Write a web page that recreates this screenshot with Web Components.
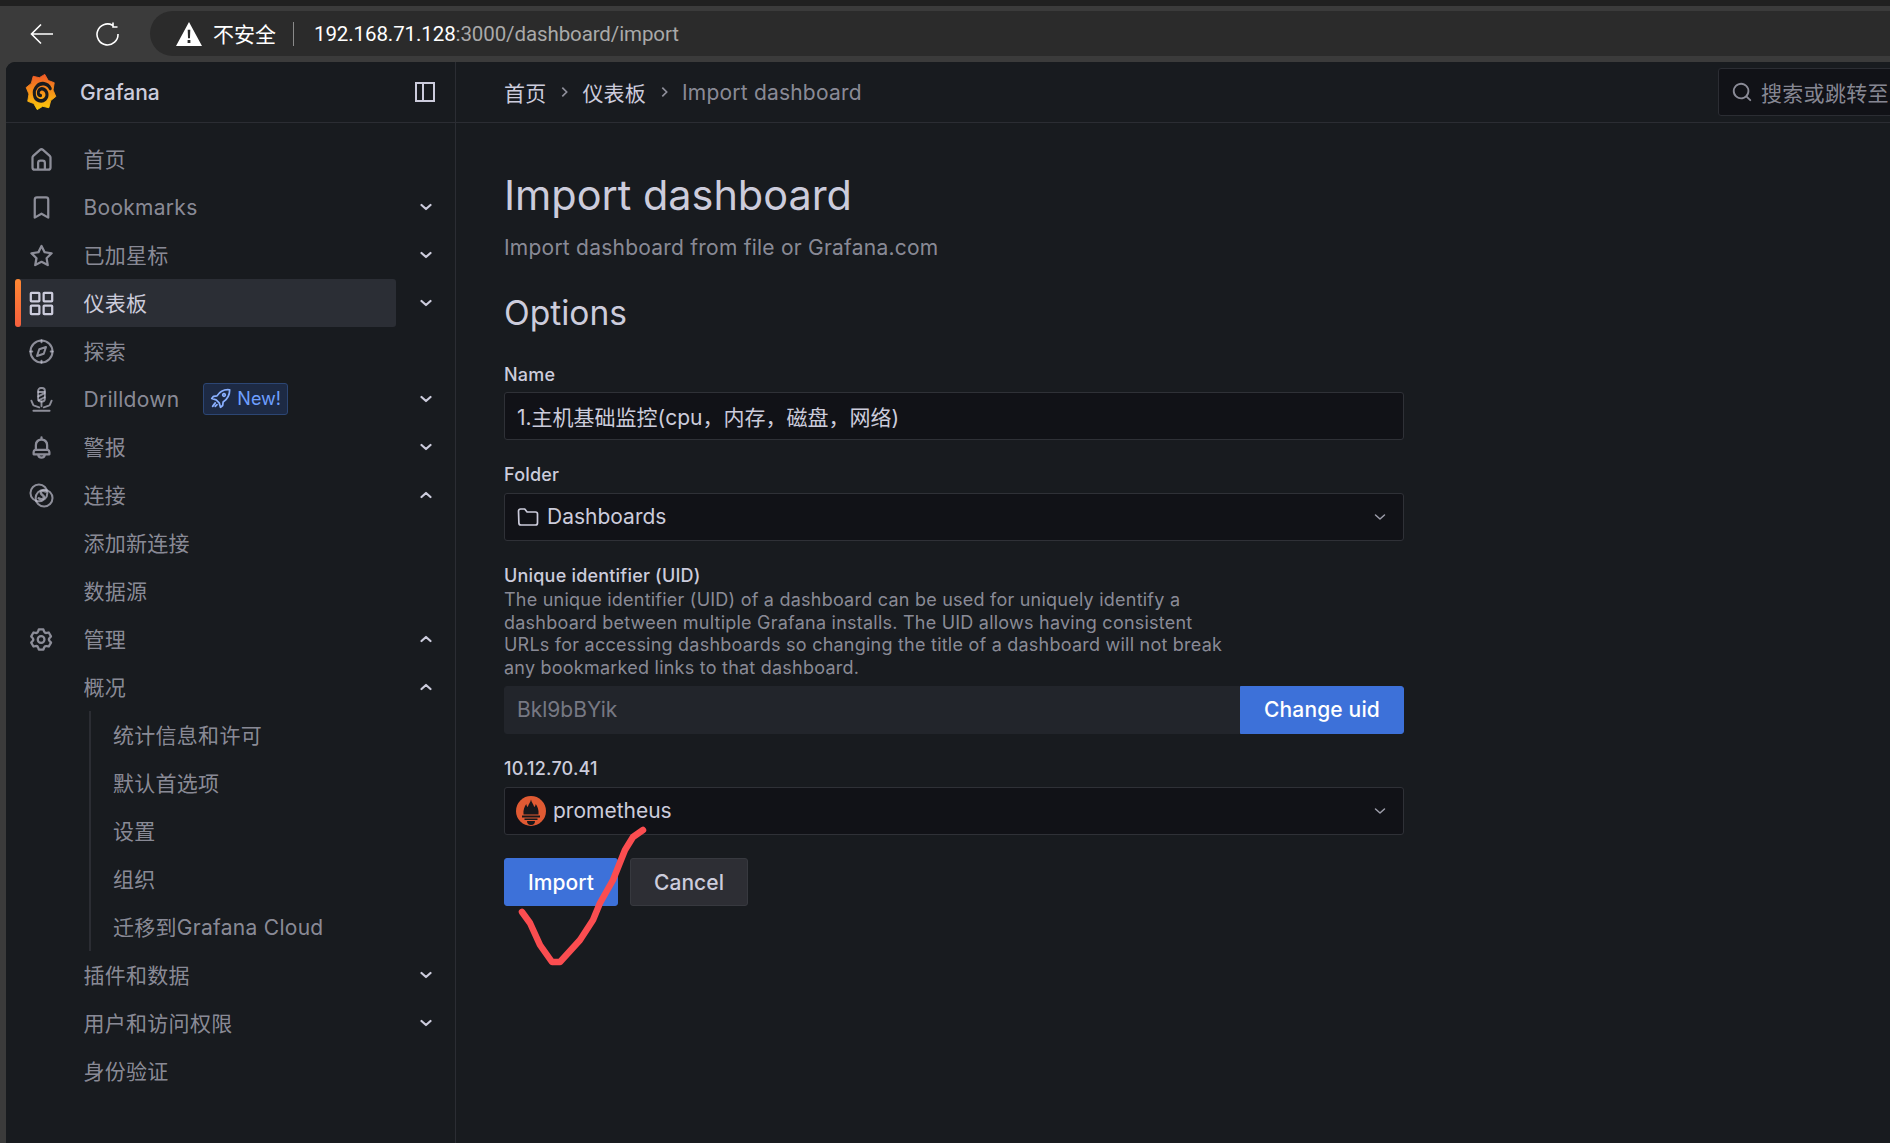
<!DOCTYPE html>
<html lang="zh">
<head>
<meta charset="utf-8">
<title>Import dashboard</title>
<style>
html,body{margin:0;padding:0;height:100%;background:#3b3b3b;overflow:hidden}
body{font-family:Inter,"Noto Sans CJK SC",sans-serif;color:#ccccdc;font-size:21px}
</style>
</head>
<body>
<browser-chrome></browser-chrome>
<grafana-app>
  <gf-sidebar slot="sidebar">
    <nav-item icon="home">首页</nav-item>
    <nav-item icon="bookmark" chevron="down">Bookmarks</nav-item>
    <nav-item icon="star" chevron="down">已加星标</nav-item>
    <nav-item icon="apps" chevron="down" active>仪表板</nav-item>
    <nav-item icon="compass">探索</nav-item>
    <nav-item icon="drilldown" chevron="down">Drilldown<new-badge slot="badge">New!</new-badge></nav-item>
    <nav-item icon="bell" chevron="down">警报</nav-item>
    <nav-item icon="link" chevron="up">连接</nav-item>
    <nav-item icon="none">添加新连接</nav-item>
    <nav-item icon="none">数据源</nav-item>
    <nav-item icon="cog" chevron="up">管理</nav-item>
    <nav-item icon="none" chevron="up">概况</nav-item>
    <nav-sub>
      <nav-item sub>统计信息和许可</nav-item>
      <nav-item sub>默认首选项</nav-item>
      <nav-item sub>设置</nav-item>
      <nav-item sub>组织</nav-item>
      <nav-item sub>迁移到Grafana Cloud</nav-item>
    </nav-sub>
    <nav-item icon="none" chevron="down">插件和数据</nav-item>
    <nav-item icon="none" chevron="down">用户和访问权限</nav-item>
    <nav-item icon="none">身份验证</nav-item>
  </gf-sidebar>
  <gf-topbar slot="topbar"></gf-topbar>
  <import-page slot="main"></import-page>
</grafana-app>
<red-check></red-check>

<script>
const ICONS = {
  home:'<path fill="currentColor" d="M20 8l-6-5.26a3 3 0 0 0-4 0L4 8a3 3 0 0 0-1 2.26V19a3 3 0 0 0 3 3h12a3 3 0 0 0 3-3v-8.75A3 3 0 0 0 20 8zm-6 12h-4v-5a1 1 0 0 1 1-1h2a1 1 0 0 1 1 1zm5-1a1 1 0 0 1-1 1h-2v-5a3 3 0 0 0-3-3h-2a3 3 0 0 0-3 3v5H6a1 1 0 0 1-1-1v-8.75a1 1 0 0 1 .34-.75l6-5.25a1 1 0 0 1 1.32 0l6 5.25a1 1 0 0 1 .34.75z"/>',
  bookmark:'<path fill="currentColor" d="M16 2H8a3 3 0 0 0-3 3v16a1 1 0 0 0 .5.87 1 1 0 0 0 1 0l5.5-3.18 5.5 3.18a1 1 0 0 0 .5.13 1 1 0 0 0 .5-.13A1 1 0 0 0 19 21V5a3 3 0 0 0-3-3zm1 17.27l-4.5-2.6a1 1 0 0 0-1 0L7 19.27V5a1 1 0 0 1 1-1h8a1 1 0 0 1 1 1z"/>',
  star:'<path fill="currentColor" d="M22 9.67a1 1 0 0 0-.86-.67l-5.69-.83L12.9 3a1 1 0 0 0-1.8 0L8.55 8.16 2.86 9a1 1 0 0 0-.81.68 1 1 0 0 0 .25 1l4.13 4-1 5.68a1 1 0 0 0 1.45 1.07L12 18.76l5.1 2.68a.93.93 0 0 0 .46.12 1 1 0 0 0 .59-.19 1 1 0 0 0 .4-1l-1-5.68 4.13-4A1 1 0 0 0 22 9.67zm-6.15 4a1 1 0 0 0-.29.89l.72 4.2-3.76-2a1.06 1.06 0 0 0-.94 0l-3.76 2 .72-4.2a1 1 0 0 0-.29-.89l-3-3 4.21-.61a1 1 0 0 0 .76-.55L12 5.7l1.88 3.82a1 1 0 0 0 .76.55l4.21.61z"/>',
  apps:'<g fill="none" stroke="currentColor" stroke-width="2"><rect x="2.500" y="2.500" width="7.600" height="7.600" rx=".6"/><rect x="13.900" y="2.500" width="7.600" height="7.600" rx=".6"/><rect x="2.500" y="13.900" width="7.600" height="7.600" rx=".6"/><rect x="13.900" y="13.900" width="7.600" height="7.600" rx=".6"/></g>',
  compass:'<g fill="none" stroke="currentColor" stroke-width="1.800"><circle cx="12" cy="12" r="9.800"/><path stroke-linejoin="round" d="M16 8l-2 6-6 2 2-6z"/><path stroke-linecap="round" d="M12 2v1.800M12 20.200V22M2 12h1.800M20.200 12H22"/></g>',
  drilldown:'<g fill="none" stroke="currentColor" stroke-width="1.700" stroke-linecap="round"><rect x="9" y="1.800" width="6" height="12" rx="2.400"/><path d="M9.200 5.300l5.600 0M9.200 9.300l5.500-3M9.400 12.800l5.400-2.800"/><path d="M12 14v4M3 13l1.600 3.800M21 13l-1.600 3.800M5.500 17.500l4.500 1.500M18.500 17.500l-4.500 1.500M4.800 22h14.400"/></g>',
  bell:'<path fill="currentColor" d="M18 13.18V10a6 6 0 0 0-5-5.91V3a1 1 0 0 0-2 0v1.09A6 6 0 0 0 6 10v3.18A3 3 0 0 0 4 16v2a1 1 0 0 0 1 1h3.14a4 4 0 0 0 7.72 0H19a1 1 0 0 0 1-1v-2a3 3 0 0 0-2-2.82zM8 10a4 4 0 0 1 8 0v3H8zm4 10a2 2 0 0 1-1.72-1h3.44A2 2 0 0 1 12 20zm6-3H6v-1a1 1 0 0 1 1-1h10a1 1 0 0 1 1 1z"/>',
  link:'<g fill="none" stroke="currentColor" stroke-width="1.800"><circle cx="9.700" cy="9.700" r="7.500"/><circle cx="14.300" cy="14.300" r="7.500"/><path stroke-width="2.200" stroke-linecap="round" d="M15.500 8.500c-2-1.500-4.500-.5-4 1.500s3.500 2 2.500 4-3 1.500-4.500.5"/></g>',
  cog:'<path fill="currentColor" d="M19.9 12.66a1 1 0 0 1 0-1.32l1.28-1.44a1 1 0 0 0 .12-1.17l-2-3.46a1 1 0 0 0-1.07-.48l-1.88.38a1 1 0 0 1-1.15-.66l-.61-1.83a1 1 0 0 0-.95-.68h-4a1 1 0 0 0-1 .68l-.56 1.83a1 1 0 0 1-1.15.66L5 4.79a1 1 0 0 0-1 .48L2 8.73a1 1 0 0 0 .1 1.17l1.27 1.44a1 1 0 0 1 0 1.32L2.1 14.1a1 1 0 0 0-.1 1.17l2 3.46a1 1 0 0 0 1.07.48l1.88-.38a1 1 0 0 1 1.15.66l.61 1.83a1 1 0 0 0 1 .68h4a1 1 0 0 0 .95-.68l.61-1.83a1 1 0 0 1 1.15-.66l1.88.38a1 1 0 0 0 1.07-.48l2-3.46a1 1 0 0 0-.12-1.17zM18.41 14l.8.9-1.28 2.22-1.18-.24a3 3 0 0 0-3.45 2L12.920 20h-2.56L10 18.860a3 3 0 0 0-3.45-2l-1.18.24-1.3-2.210.8-.9a3 3 0 0 0 0-4l-.8-.9 1.28-2.200 1.18.24a3 3 0 0 0 3.45-2L10.360 4h2.560l.38 1.140a3 3 0 0 0 3.450 2l1.180-.24 1.280 2.220-.8.9a3 3 0 0 0 0 3.980zm-6.770-6a4 4 0 1 0 4 4 4 4 0 0 0-4-4zm0 6a2 2 0 1 1 2-2 2 2 0 0 1-2 2z"/>',
  search:'<path fill="currentColor" d="M21.71 20.29L18 16.61A9 9 0 1 0 16.61 18l3.68 3.68a1 1 0 0 0 1.42 0 1 1 0 0 0 0-1.39zM11 18a7 7 0 1 1 7-7 7 7 0 0 1-7 7z"/>',
  folder:'<path fill="none" stroke="currentColor" stroke-width="1.700" stroke-linejoin="round" d="M2.500 6a2 2 0 0 1 2-2h4.200l2.400 3h8.400a2 2 0 0 1 2 2v9a2 2 0 0 1-2 2h-14.600a2 2 0 0 1-2-2z"/>'
};
const svg = (name,size=24) => name==='none'||!ICONS[name] ? `<svg width="${size}" height="${size}"></svg>` :
  `<svg width="${size}" height="${size}" viewBox="0 0 24 24" aria-hidden="true">${ICONS[name]}</svg>`;
const chev = (dir,w=12,sw=2.2) => `<svg width="${w}" height="${w}" viewBox="0 0 12 12" aria-hidden="true"><path fill="none" stroke="currentColor" stroke-width="${sw}" stroke-linecap="round" stroke-linejoin="round" d="${dir==='up'?'M1.500 8l4.500-4 4.500 4':'M1.500 4l4.500 4 4.500-4'}"/></svg>`;

class Base extends HTMLElement{
  render(html){ (this.shadowRoot||this.attachShadow({mode:'open'})).innerHTML = html; }
  connectedCallback(){ this.render(this.markup()); }
}

customElements.define('browser-chrome', class extends Base{ markup(){return `
<style>
:host{display:block;height:62px;background:#3b3b3b;border-top:6px solid #202020;box-sizing:border-box;font-family:Roboto,"Noto Sans CJK SC",sans-serif;color:#fff;overflow:hidden}
.bar{display:flex;align-items:center;height:56px;padding-left:30px}
.btn{display:flex;width:24px;height:24px;margin-right:42px}
.btn.last{margin-right:30px}
.pill{flex:1;display:flex;align-items:center;height:45px;margin-top:-1px;background:#2b2b2b;border-radius:23px 0 0 23px;padding-left:26px}
.warn{font-size:21px;margin-left:11px;padding-bottom:2px}
.div{width:1px;height:24px;background:#8a8a8a;margin:0 20px 0 17px}
.url{font-size:20.500px;letter-spacing:-.1px;white-space:nowrap;color:#a9a9a9}
.url b{font-weight:400;color:#fff}
</style>
<div class="bar">
  <span class="btn"><svg width="24" height="24" viewBox="0 0 24 24"><path fill="none" stroke="#fff" stroke-width="1.600" d="M23 12H1.500M11 2.500L1.500 12l9.500 9.500"/></svg></span>
  <span class="btn last"><svg width="24" height="24" viewBox="0 0 24 24"><path fill="none" stroke="#fff" stroke-width="1.600" d="M16.500 3.200A10.500 10.500 0 1 0 22 12M17 .5v4.500h4.500"/></svg></span>
  <div class="pill">
    <svg width="26" height="24" viewBox="0 0 24 22"><path fill="#fff" fill-rule="evenodd" d="M12 0L24 22H0zM10.800 7h2.400l-.3 8h-1.800zM10.700 16.500h2.600v2.700h-2.600z"/></svg>
    <span class="warn">不安全</span><span class="div"></span>
    <span class="url"><b>192.168.71.128</b>:3000/dashboard/import</span>
  </div>
</div>`}});

customElements.define('grafana-app', class extends Base{ markup(){return `
<style>
:host{display:block;height:calc(100vh - 62px);margin-left:6px;background:#181b1f;border-top-left-radius:9px;overflow:hidden}
.top{display:grid;grid-template-columns:450px 1fr;height:100%}
.col{display:flex;flex-direction:column;min-width:0;overflow:hidden}
</style>
<div class="top">
  <slot name="sidebar"></slot>
  <div class="col"><slot name="topbar"></slot><slot name="main"></slot></div>
</div>`}});

customElements.define('gf-logo', class extends Base{ markup(){
  const cx=19,cy=19,n=8; let p='';
  for(let i=0;i<n*2;i++){const a=-Math.PI/2+i*Math.PI/n+.25,r=i%2?14.4:18.2;p+=(i?'L':'M')+(cx+r*Math.cos(a)).toFixed(1)+' '+(cy+r*Math.sin(a)).toFixed(1)}
  return `<style>:host{display:flex;margin-left:-1px}</style>
<svg width="32" height="38" viewBox="0 0 38 38" preserveAspectRatio="none" aria-label="Grafana logo"><defs><linearGradient id="g" x1="0" y1="0" x2="0" y2="1"><stop offset="0" stop-color="#f05a28"/><stop offset="1" stop-color="#fbca0a"/></linearGradient></defs>
<path fill="url(#g)" stroke="url(#g)" stroke-width="1" stroke-linejoin="round" d="${p}Z"/>
<path fill="none" stroke="#181b1f" stroke-width="3.600" stroke-linecap="round" d="M30 15.500C27 10 19 9 14 13.500S10.500 26 16.500 27.500s10.500-2.500 9.500-7-6.500-6-9-3.500-1 5.500 1.500 5.500"/>
</svg>`}});

customElements.define('gf-sidebar', class extends Base{ markup(){return `
<style>
:host{display:block;box-sizing:border-box;height:100%;border-right:1px solid #2b2d33;background:#181b1f;overflow:hidden}
header{display:flex;align-items:center;height:61px;box-sizing:border-box;border-bottom:1px solid #2b2d33;padding:0 19px 0 20px}
.name{flex:1;margin-left:23px;font-weight:500;font-size:21px;color:#ccccdc}
nav{padding:12px 0 0 9px}
.dock{display:flex}
</style>
<header><gf-logo></gf-logo><span class="name">Grafana</span>
<span class="dock"><svg width="22" height="22" viewBox="0 0 22 22"><path fill="none" stroke="#ccccdc" stroke-width="2" d="M2 2h18v18H2zM9 2v18"/></svg></span></header>
<nav><slot></slot></nav>`}});

customElements.define('nav-item', class extends Base{ markup(){
  const sub=this.hasAttribute('sub'), ic=this.getAttribute('icon')||'none', ch=this.getAttribute('chevron');
  const cjk=/[^\x00-\x7f]/.test(this.textContent);
  return `
<style>
:host{display:grid;grid-template-columns:${sub?'1fr':'381px 60px'};height:48px;color:rgba(204,204,220,.65);letter-spacing:.28px}
:host([active]){color:#ccccdc}
.row{display:flex;align-items:center;position:relative;padding-left:${sub?'22px':'13px'};border-radius:3px;white-space:nowrap}
:host([active]) .row{background:#2b2e35}
:host([active]) .row::before{content:"";position:absolute;left:0;top:0;bottom:0;width:6px;border-radius:3px;background:linear-gradient(#ff8833,#f55f3e)}
.ic{display:flex;margin-right:28.500px}
.t{${cjk?'padding-bottom:2px;':''}}
.ch{display:flex;align-items:center;justify-content:center;color:#ccccdc}
</style>
<div class="row">${sub?'':`<span class="ic">${svg(ic,27)}</span>`}<span class="t"><slot></slot></span><slot name="badge"></slot></div>
${sub?'':`<div class="ch">${ch?chev(ch):''}</div>`}`}});

customElements.define('nav-sub', class extends Base{ markup(){return `
<style>:host{display:block;margin-left:74px;border-left:2px solid #2b2d33}</style><slot></slot>`}});

customElements.define('new-badge', class extends Base{ markup(){return `
<style>:host{display:inline-flex;align-items:center;gap:6px;box-sizing:border-box;height:32px;margin:-1px 0 0 24px;padding:0 6px;background:#1d2a44;border:1px solid #2c4674;border-radius:3px;color:#6e9fff;font-size:18px;font-weight:400;letter-spacing:0}</style>
<svg width="21" height="21" viewBox="0 0 24 24"><path fill="none" stroke="#8ab0ff" stroke-width="2" stroke-linejoin="round" stroke-linecap="round" d="M22 2c-6-.5-10.500 1.500-14 7L4 9.500 2 12l5 1.500L10.500 17l1.500 5 2.500-2 .5-4c5.500-3.500 7.500-8 7.500-14zM6 17l-3 4M8 19l-2 2M16 6.500a1.500 1.500 0 1 0 .01 0z"/></svg><slot></slot>`}});

customElements.define('gf-topbar', class extends Base{ markup(){
  const sep=`<svg width="11" height="14" viewBox="0 0 10 12"><path fill="none" stroke="currentColor" stroke-width="1.500" d="M3 2l4 4-4 4"/></svg>`;
  return `
<style>
:host{display:flex;align-items:center;flex:none;height:61px;box-sizing:border-box;border-bottom:1px solid #2b2d33;padding-left:48px;overflow:hidden;white-space:nowrap}
.c{color:#ccccdc;letter-spacing:.2px}.m{color:rgba(204,204,220,.65);letter-spacing:.2px}
.s{display:inline-flex;width:36px;justify-content:center;color:rgba(204,204,220,.65)}
.search{flex:none;display:flex;align-items:center;box-sizing:border-box;width:300px;height:48px;margin-left:auto;background:#111217;border:1px solid #2b2d33;border-radius:3px;padding-left:12px;color:rgba(204,204,220,.65);position:relative;left:128px;letter-spacing:.3px}
.search svg{margin-right:8px}
</style>
<span class="c">首页</span><span class="s">${sep}</span>
<span class="c">仪表板</span><span class="s">${sep}</span>
<span class="m">Import dashboard</span>
<div class="search">${svg('search',22)}<span>搜索或跳转至</span></div>`}});

customElements.define('form-field', class extends Base{ markup(){return `
<style>
:host{display:block;margin-bottom:24.700px}
.l{font-size:18px;font-weight:500;line-height:22px;color:#ccccdc;display:block;letter-spacing:.2px}
.b{display:block;margin-top:6.300px}
</style>
<span class="l">${this.getAttribute('label')}</span>
<slot name="desc"></slot>
<div class="b"><slot></slot></div>`}});

customElements.define('gf-input', class extends Base{ markup(){return `
<style>
:host{display:flex;align-items:center;box-sizing:border-box;height:48px;flex:1;background:#111217;border:1px solid #2f3137;border-radius:3px;padding:0 17px 0 12px;color:#ccccdc;white-space:nowrap;min-width:0}
:host([disabled]){background:#22252b;border-color:#22252b;color:rgba(204,204,220,.5);border-radius:3px 0 0 3px}
.g{flex:1;display:flex;align-items:center;min-width:0}
</style>
<div class="g"><slot name="icon"></slot><slot></slot></div>${this.hasAttribute('select')?`<span style="display:flex;color:rgba(204,204,220,.75)">${chev('down',12,1.5)}</span>`:''}`}});

customElements.define('prom-icon', class extends Base{ markup(){return `
<style>:host{display:flex;margin:0 7px 0 -1px}</style>
<svg width="30" height="30" viewBox="0 0 30 30" aria-label="Prometheus"><circle cx="15" cy="15" r="15" fill="#e05a33"/>
<path fill="#16171b" d="M15 3.500c.4 3 2.600 4.600 3.200 7.500.8-.6 1.400-1.600 1.500-3 1.800 2.500 3.300 6 2.800 10.500H7.500C7 14 8.500 10.500 10.300 8c.1 1.400.7 2.400 1.500 3 .6-2.900 2.800-4.500 3.200-7.500z"/>
<path fill="#16171b" d="M6 19.500h18v2H6zM8.500 22.500h13v1.500h-13zM11 25h8a4 4 0 0 1-8 0z"/></svg>`}});

customElements.define('gf-button', class extends Base{ markup(){return `
<style>
:host{display:inline-flex;align-items:center;justify-content:center;box-sizing:border-box;height:48px;padding:0 23px;border-radius:3px;font-weight:500;font-size:21px;letter-spacing:.05px;white-space:nowrap;background:#2d2e34;border:1px solid #37393f;color:#ccccdc}
:host([primary]){background:#3d71d9;border-color:#3d71d9;color:#fff}
:host([attached]){border-radius:0 3px 3px 0;padding:0;flex:none;width:164px;letter-spacing:.15px}
</style><slot></slot>`}});

customElements.define('import-page', class extends Base{ markup(){return `
<style>
:host{display:block;flex:1;padding:47px 0 0 48px;overflow:hidden}
h1{margin:0;font-size:41.400px;line-height:50px;font-weight:400;color:#ccccdc}
.sub{margin:13px 0 0;font-size:21px;line-height:30px;letter-spacing:.23px;color:rgba(204,204,220,.65)}
h2{margin:30px 0 30.500px;font-size:33.600px;line-height:40px;font-weight:400;color:#ccccdc}
form{width:900px;display:block}
.u{display:flex}
.d{display:block;font-size:18px;line-height:22.500px;letter-spacing:.23px;color:rgba(204,204,220,.65);width:780px;margin-top:2px}
.fi{display:flex;margin:0 7px 0 -1px}
.acts{display:flex;gap:12px;margin-top:-1px}
</style>
<h1>Import dashboard</h1>
<p class="sub">Import dashboard from file or Grafana.com</p>
<h2>Options</h2>
<form>
  <form-field label="Name"><gf-input>1.主机基础监控(cpu，内存，磁盘，网络)</gf-input></form-field>
  <form-field label="Folder"><gf-input select><span slot="icon" class="fi">${svg('folder',24)}</span>Dashboards</gf-input></form-field>
  <form-field label="Unique identifier (UID)">
    <span slot="desc" class="d">The unique identifier (UID) of a dashboard can be used for uniquely identify a<br>dashboard between multiple Grafana installs. The UID allows having consistent<br>URLs for accessing dashboards so changing the title of a dashboard will not break<br>any bookmarked links to that dashboard.</span>
    <div class="u"><gf-input disabled>Bkl9bBYik</gf-input><gf-button primary attached>Change uid</gf-button></div>
  </form-field>
  <form-field label="10.12.70.41"><gf-input select><prom-icon slot="icon"></prom-icon>prometheus</gf-input></form-field>
  <div class="acts"><gf-button primary>Import</gf-button><gf-button>Cancel</gf-button></div>
</form>`}});

customElements.define('red-check', class extends Base{ markup(){return `
<style>:host{position:absolute;left:0;top:0;width:1890px;height:1143px;pointer-events:none}</style>
<svg width="1890" height="1143" viewBox="0 0 1890 1143"><path fill="none" stroke="#fb4d50" stroke-width="6.500" stroke-linecap="round" stroke-linejoin="round" d="M522 912L530 923L540 945L552 962L560 962L580 940L593 920L600 903L613 880L625 850L633 837L643 830"/></svg>`}});
</script>
</body>
</html>
